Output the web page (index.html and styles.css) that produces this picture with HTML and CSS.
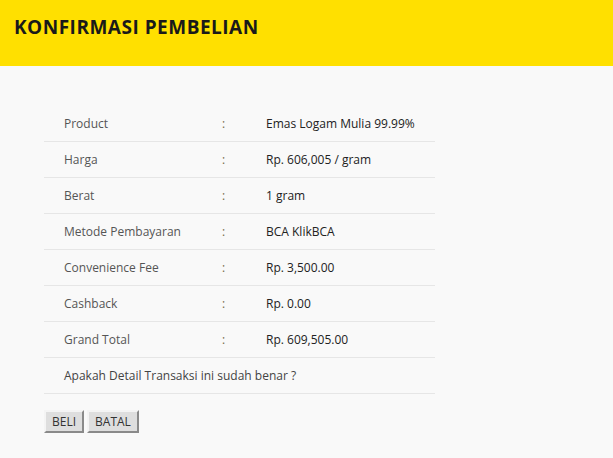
FILE: index.html
```html
<!DOCTYPE html>
<html>
<head>
<meta charset="utf-8">
<link rel="stylesheet" href="styles.css">
</head>
<body>
<header class="header">
  <h1 class="title">KONFIRMASI PEMBELIAN</h1>
</header>
<main class="content">
  <table class="detail">
    <colgroup><col class="col-label"><col class="col-colon"><col></colgroup>
    <tr><td class="label">Product</td><td class="colon">:</td><td class="value">Emas Logam Mulia 99.99%</td></tr>
    <tr><td class="label">Harga</td><td class="colon">:</td><td class="value">Rp. 606,005 / gram</td></tr>
    <tr><td class="label">Berat</td><td class="colon">:</td><td class="value">1 gram</td></tr>
    <tr><td class="label">Metode Pembayaran</td><td class="colon">:</td><td class="value">BCA KlikBCA</td></tr>
    <tr><td class="label">Convenience Fee</td><td class="colon">:</td><td class="value">Rp. 3,500.00</td></tr>
    <tr><td class="label">Cashback</td><td class="colon">:</td><td class="value">Rp. 0.00</td></tr>
    <tr><td class="label">Grand Total</td><td class="colon">:</td><td class="value">Rp. 609,505.00</td></tr>
    <tr><td class="label question" colspan="3">Apakah Detail Transaksi ini sudah benar ?</td></tr>
  </table>
  <div class="actions">
    <button class="btn">BELI</button>
    <button class="btn">BATAL</button>
  </div>
</main>
</body>
</html>
```
FILE: styles.css
```css
html, body {
  margin: 0;
  padding: 0;
  background: #f9f9f9;
  font-family: "Open Sans", "Liberation Sans", sans-serif;
}
.header {
  background: #ffe000;
  height: 66px;
  padding: 0 14px;
  box-sizing: border-box;
  display: flex;
  align-items: center;
}
.title {
  margin: 0;
  margin-top: -13px;
  font-size: 19px;
  font-weight: 700;
  letter-spacing: 0.5px;
  color: #1a1a1a;
}
.content {
  padding: 40px 44px 20px;
}
.detail {
  width: 391px;
  table-layout: fixed;
  border-collapse: collapse;
  font-size: 12px;
}
.col-label { width: 178px; }
.col-colon { width: 44px; }
.detail td {
  height: 35px;
  padding: 0;
  border-bottom: 1px solid #e6e6e6;
  vertical-align: middle;
  white-space: nowrap;
}
.detail td.label {
  padding-left: 20px;
  color: #555;
}
.colon {
  color: #7a6a4a;
}
.value {
  color: #222;
}
.detail td.question {
  color: #444;
}
.actions {
  display: flex;
  gap: 3px;
  margin-top: 16px;
}
.btn {
  font-family: "Open Sans", "Liberation Sans", sans-serif;
  font-size: 12px;
  color: #333;
  background: #dedede;
  border: 2px solid;
  border-color: #f4f4f4 #8a8a8a #8a8a8a #f4f4f4;
  height: 23px;
  padding: 0 6px;
  line-height: 1;
}
```
